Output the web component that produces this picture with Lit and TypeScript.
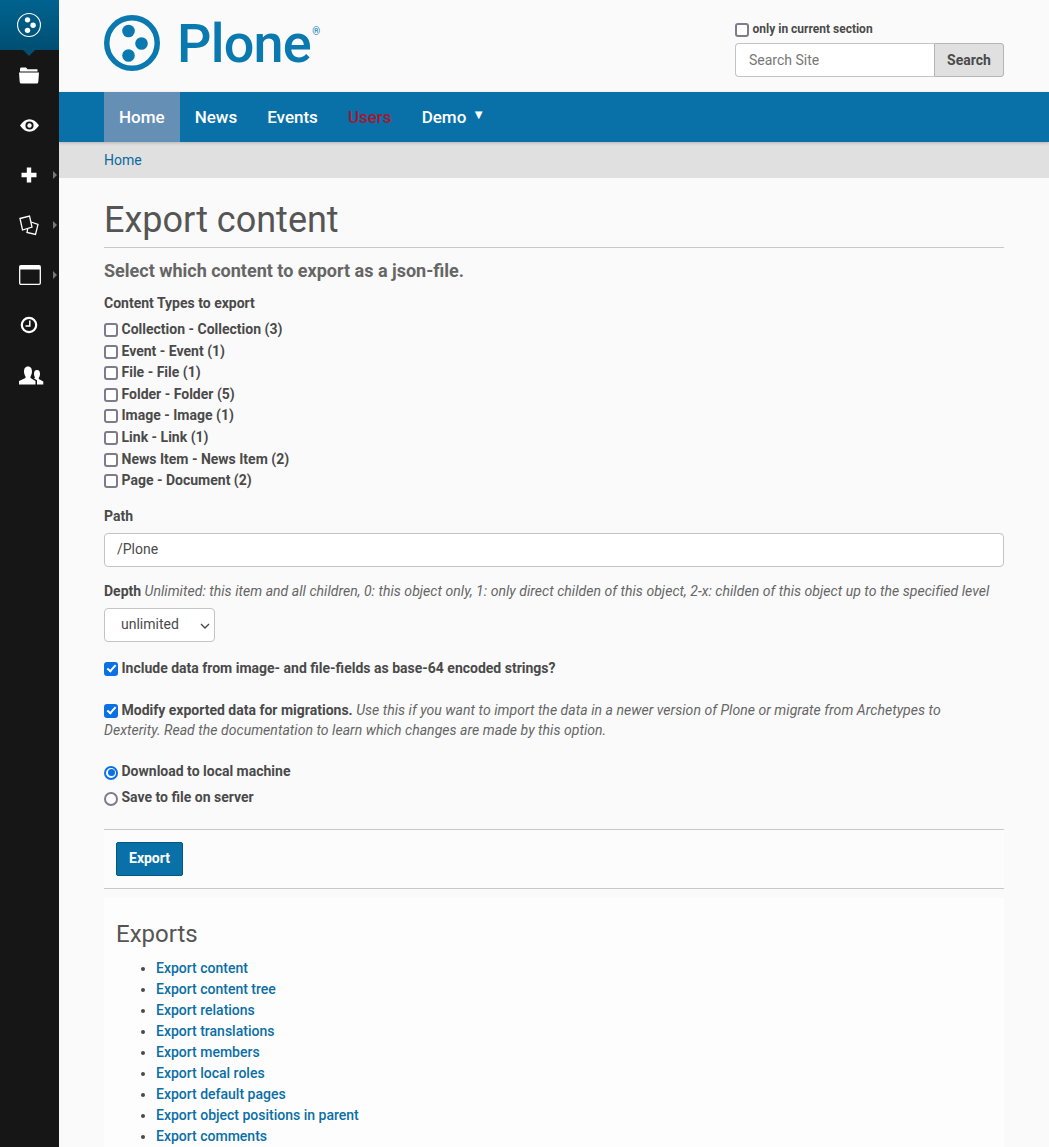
import { LitElement, html, css, svg } from "lit";
import { customElement } from "lit/decorators.js";

const types = ["Collection - Collection (3)", "Event - Event (1)", "File - File (1)", "Folder - Folder (5)", "Image - Image (1)", "Link - Link (1)", "News Item - News Item (2)", "Page - Document (2)"];
const links = ["Export content", "Export content tree", "Export relations", "Export translations", "Export members", "Export local roles", "Export default pages", "Export object positions in parent", "Export comments"];

const logoMark = (size: number, color: string, sw: number) => svg`
  <svg width=${size} height=${size} viewBox="0 0 56 56" aria-hidden="true">
    <circle cx="28" cy="28" r=${28 - sw / 2} fill="none" stroke=${color} stroke-width=${sw}></circle>
    <circle cx="24.5" cy="16" r="6.3" fill=${color}></circle>
    <circle cx="37.5" cy="28.5" r="6.3" fill=${color}></circle>
    <circle cx="24.5" cy="40.5" r="6.3" fill=${color}></circle>
  </svg>`;

const icons = [
  { cls: "", h: svg`<svg width="20" height="17" viewBox="0 0 20 17"><path d="M1 2Q1 .6 2.500 .6H7l1.500 1.600H18.500V4.500H1Z" fill="#fff"/><path d="M0 5.500H20L19.300 15q-.1 1.500-1.600 1.500H2.300Q.8 16.500 .7 15Z" fill="#fff"/></svg>` },
  { cls: "", h: svg`<svg width="19" height="13" viewBox="0 0 20 13"><path fill-rule="evenodd" d="M0 6.500Q4.500 0 10 0T20 6.500Q15.500 13 10 13T0 6.500ZM10 2.200A4.300 4.300 0 1 0 10 10.800A4.300 4.300 0 1 0 10 2.200Z" fill="#fff"/><circle cx="10" cy="6.500" r="2.300" fill="#fff"/></svg>` },
  { cls: "arrow", h: svg`<svg width="16" height="16" viewBox="0 0 16 16"><path d="M5.800 0.500H10.200V5.800H15.500V10.200H10.200V15.500H5.800V10.200H0.500V5.800H5.800Z" fill="#fff" /></svg>` },
  { cls: "arrow", h: svg`<svg width="20" height="21" viewBox="0 0 20 21"><g fill="none" stroke="#fff" stroke-width="1.300"><path d="M1 3.500 L10.500 1 L13 12 L3.500 15Z"/><path d="M12 7 L19 9.500 L16.500 19.500 L8 17.500 L8.700 14"/></g></svg>` },
  { cls: "arrow centred", h: svg`<svg width="22" height="20" viewBox="0 0 22 20"><rect x="0.700" y="0.700" width="20.600" height="18.600" rx="1.200" fill="none" stroke="#fff" stroke-width="1.300"/><rect x="1" y="1" width="20" height="3.500" fill="#fff"/></svg>` },
  { cls: "", h: svg`<svg width="18" height="18" viewBox="0 0 18 18"><circle cx="9" cy="9" r="7.200" fill="none" stroke="#fff" stroke-width="2.200"/><path d="M9.800 4.500V10H5.500" fill="none" stroke="#fff" stroke-width="1.500"/></svg>` },
  { cls: "right", h: svg`<svg width="25" height="19" viewBox="0 0 25 19"><path d="M9 0.500C12 0.500 13 3 13 5.500C13 8 12 9.500 11.500 10.500L11.500 12L16.500 15V18.500H0V15L6.500 12V10.500C6 9.500 5 8 5 5.500C5 3 6 0.500 9 0.500Z" fill="#fff"/><path d="M18 4C20.500 4 21 6 21 8C21 10 20.200 11 19.800 12L19.800 13L24.300 15.500V18.500H18V14.300L15 12.500L16 11.500C15.500 10.500 15 9.500 15 8C15 6 15.500 4 18 4Z" fill="#fff"/></svg>` },
];

@customElement("app-root")
export class AppRoot extends LitElement {
  static styles = css`
    :host { display: flex; height: 1147px; overflow: hidden; background: #fafafa; color: #4a4a4a; font: 14px/20px Roboto, "Liberation Sans", sans-serif; }
    * { box-sizing: border-box; }
    a { text-decoration: none; }
    .side { width: 59px; flex: none; background: #161616; display: flex; flex-direction: column; }
    .brand { height: 50px; flex: none; background: linear-gradient(#00638f, #004f73); display: flex; align-items: center; justify-content: center; position: relative; padding-right: 1px; padding-bottom: 1px; }
    .brand::after { content: ""; position: absolute; left: 23px; top: 50px; border: 6px solid transparent; border-top-color: #004f73; border-bottom: 0; }
    .sitem { height: 50px; flex: none; display: flex; align-items: center; justify-content: center; position: relative; padding-right: 1px; }
    .sitem.centred { padding-right: 0; padding-left: 1px; }
    .sitem.right { padding-right: 0; padding-left: 3px; }
    .sitem.arrow::after { content: ""; position: absolute; right: 2px; top: 21px; border-left: 4px solid #777; border-top: 4px solid transparent; border-bottom: 4px solid transparent; }
    .main { flex: 1; min-width: 0; display: flex; flex-direction: column; }
    .head { height: 92px; flex: none; padding: 15px 45px 0; display: flex; justify-content: space-between; }
    .logo { display: flex; align-items: flex-start; color: #0a79b0; gap: 17px; }
    .word { font-size: 54px; line-height: 56px; letter-spacing: -0.800px; font-weight: 500; position: relative; top: 1px; }
    .reg { font-size: 10px; line-height: 10px; position: relative; top: 12px; left: -15.500px; font-weight: 500; }
    .search { width: 269px; padding-top: 6px; }
    .only { display: flex; align-items: center; height: 16px; font-size: 12px; line-height: 16px; font-weight: 700; margin-bottom: 6px; }
    .only input { margin: 0 4px 0 0; top: 1px; }
    .sbox { display: flex; height: 34px; }
    .sinput { flex: 1; min-width: 0; border: 1px solid #c4c4c4; border-right: 0; border-radius: 4px 0 0 4px; background: #fff; padding: 0 13px; font: 14px Roboto, sans-serif; color: #555; }
    .sinput::placeholder { color: #777; opacity: 1; }
    .sbtn { width: 70px; border: 1px solid #b5b5b5; border-radius: 0 3px 3px 0; background: #e0e0e0; font: 700 14px Roboto, sans-serif; color: #4a4a4a; padding: 0; }
    .nav { height: 50px; flex: none; background: #0a71a8; padding: 0 45px; display: flex; box-shadow: 0 1px 3px rgba(0, 0, 0, .2); position: relative; font-size: 17px; font-weight: 500; }
    .nav a { color: #fff; padding: 0 15px; display: flex; align-items: center; white-space: nowrap; }
    .nav a.on { background: #658fb5; }
    .nav a.red { color: #a6172f; }
    .tri { font-size: 13px; margin-left: 6px; position: relative; top: -2px; line-height: 10px; }
    .crumb { height: 36px; flex: none; background: #e1e0e1; padding: 0 45px; display: flex; align-items: center; }
    .crumb a { color: #0a6a9e; }
    .content { padding: 0 45px; }
    h1 { margin: 22px 0 0; padding-bottom: 7px; font-size: 36px; line-height: 40px; font-weight: 400; color: #555; border-bottom: 1px solid #c8c8c8; }
    .desc { font-size: 18px; line-height: 22px; font-weight: 700; color: #666; margin-top: 12px; }
    .lbl { font-weight: 700; color: #4a4a4a; }
    .ctype { margin-top: 11px; height: 20px; }
    .checks { margin-top: 5.200px; display: flex; flex-direction: column; }
    .chk { height: 21.600px; display: flex; align-items: center; font-weight: 700; }
    input[type="checkbox"], input[type="radio"] { appearance: none; margin: 0 3.500px 0 0; width: 14px; height: 14px; flex: none; position: relative; top: 1px; border: 2px solid #7d7b8c; border-radius: 3px; background: #fff; }
    input[type="radio"] { border-radius: 50%; }
    input[type="checkbox"]:checked { background: #0b6fe6; border-color: #0b6fe6; }
    input[type="checkbox"]:checked::after { content: ""; position: absolute; left: 2.500px; top: -0.500px; width: 5px; height: 9px; border: solid #fff; border-width: 0 2px 2px 0; transform: rotate(42deg); box-sizing: border-box; }
    input[type="radio"]:checked { border-color: #0b6fe6; }
    input[type="radio"]:checked::after { content: ""; position: absolute; inset: 1.500px; background: #0b6fe6; border-radius: 50%; }
    .path { margin-top: 14.800px; height: 20px; }
    .ptext { display: block; width: 100%; height: 34px; margin-top: 7px; border: 1px solid #c4c4c4; border-radius: 4px; background: #fff; padding: 0 12px 1px; font: 14px Roboto, sans-serif; color: #4a4a4a; }
    .depth { margin-top: 14px; height: 20px; font-weight: 700; }
    em { font-weight: 400; color: #666; letter-spacing: .042px; }
    select { appearance: none; display: block; width: 111px; height: 34px; border: 1px solid #c4c4c4; border-radius: 4px; background: #fff; padding: 0 16px 1px; font: 14px Roboto, sans-serif; color: #4a4a4a; }
    .selwrap { position: relative; width: 111px; margin-top: 7px; }
    .chev { position: absolute; right: 4px; top: 14px; pointer-events: none; }
    .inc { margin-top: 16px; height: 20px; display: flex; align-items: center; font-weight: 700; }
    .mod { margin-top: 22px; font-weight: 700; }
    .mod input { display: inline-block; vertical-align: -3px; top: 0; }
    .radio1 { margin-top: 21px; }
    .radio2 { margin-top: 6px; }
    .radio { height: 20px; display: flex; align-items: center; font-weight: 700; }
    .radio input { top: 2px; }
    .actions { margin-top: 22px; border-top: 1px solid #c8c8c8; border-bottom: 1px solid #c8c8c8; background: #fcfcfc; height: 60px; padding: 12px; }
    .export { display: block; width: 67px; height: 34px; background: #0a71a8; border: 1px solid #04577f; border-radius: 2px; color: #fff; font: 700 14px Roboto, sans-serif; padding: 0 0 2px; }
    .panel { margin-top: 9px; background: #fdfdfd; padding: 12px; }
    h2 { margin: 10px 0 0; font-size: 24px; line-height: 28px; font-weight: 400; color: #555; }
    ul { margin: 10px 0 0; padding: 0 0 0 40px; }
    li { line-height: 21px; }
    li a { color: #0a6fa6; font-weight: 500; }
  `;
  render() {
    return html`
      <aside class="side">
        <div class="brand">${logoMark(24, "#fff", 2.6)}</div>
        ${icons.map((i) => html`<div class="sitem ${i.cls}">${i.h}</div>`)}
      </aside>
      <div class="main">
        <header class="head">
          <div class="logo">
            ${logoMark(56, "#0a79b0", 5.5)}
            <span class="word">Plone</span><span class="reg">®</span>
          </div>
          <div class="search">
            <label class="only"><input type="checkbox" />only in current section</label>
            <div class="sbox"><input class="sinput" placeholder="Search Site" /><button class="sbtn">Search</button></div>
          </div>
        </header>
        <nav class="nav">
          <a class="on">Home</a><a>News</a><a>Events</a><a class="red">Users</a><a>Demo<span class="tri">▼</span></a>
        </nav>
        <div class="crumb"><a>Home</a></div>
        <main class="content">
          <h1>Export content</h1>
          <div class="desc">Select which content to export as a json-file.</div>
          <div class="lbl ctype">Content Types to export</div>
          <div class="checks">
            ${types.map((t) => html`<label class="chk"><input type="checkbox" />${t}</label>`)}
          </div>
          <div class="lbl path">Path</div>
          <input class="ptext" value="/Plone" />
          <div class="depth">Depth <em>Unlimited: this item and all children, 0: this object only, 1: only direct childen of this object, 2-x: childen of this object up to the specified level</em></div>
          <div class="selwrap"><select><option>unlimited</option></select>
            <svg class="chev" width="12" height="8" viewBox="0 0 12 8"><path d="M2 2l4 4 4-4" fill="none" stroke="#444" stroke-width="1.300"/></svg>
          </div>
          <label class="inc"><input type="checkbox" checked />Include data from image- and file-fields as base-64 encoded strings?</label>
          <div class="mod"><input type="checkbox" checked />Modify exported data for migrations. <em>Use this if you want to import the data in a newer version of Plone or migrate from Archetypes to<br />Dexterity. Read the documentation to learn which changes are made by this option.</em></div>
          <label class="radio radio1"><input type="radio" name="d" checked />Download to local machine</label>
          <label class="radio radio2"><input type="radio" name="d" />Save to file on server</label>
          <div class="actions"><button class="export">Export</button></div>
          <section class="panel">
            <h2>Exports</h2>
            <ul>${links.map((l) => html`<li><a>${l}</a></li>`)}</ul>
          </section>
        </main>
      </div>
    `;
  }
}
